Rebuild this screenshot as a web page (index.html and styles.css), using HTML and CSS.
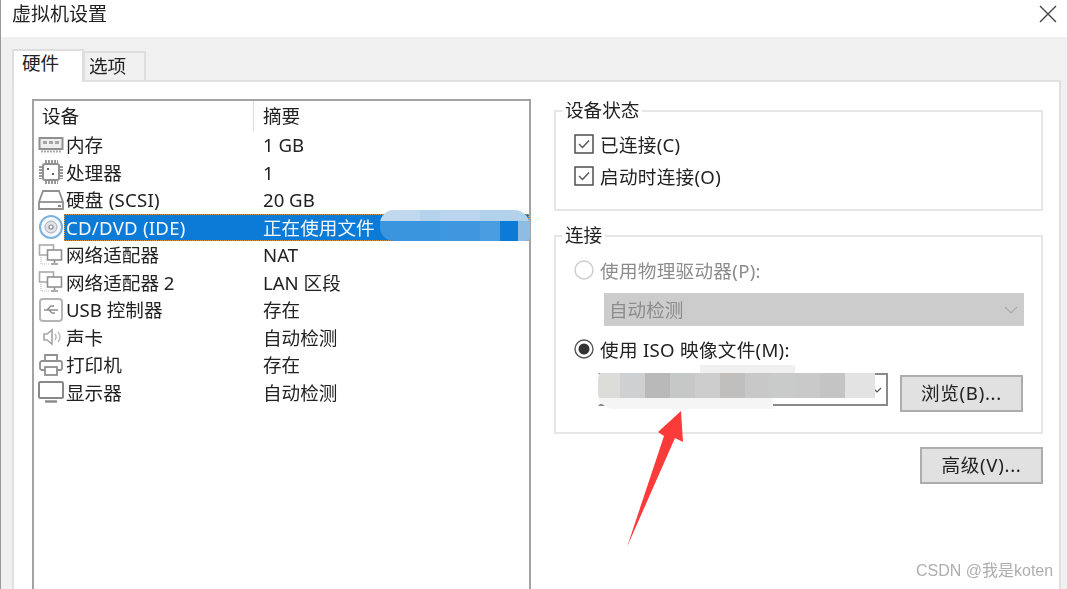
FILE: index.html
```html
<!DOCTYPE html>
<html lang="zh-CN">
<head>
  <meta charset="UTF-8">
  <meta name="viewport" content="width=device-width, initial-scale=1.0">
  <title>虚拟机设置</title>
  <link rel="stylesheet" href="styles.css">
</head>
<body>
  <div class="window">
    <div class="titlebar">
      <span class="title">虚拟机设置</span>
      <svg class="close" width="18" height="18" viewBox="0 0 18 18"><path d="M1 1L17 17M17 1L1 17" stroke="#444" stroke-width="1.4" fill="none"/></svg>
    </div>

    <div class="tabs">
      <div class="tab active">硬件</div>
      <div class="tab">选项</div>
    </div>

    <div class="panel">
      <div class="device-list">
        <div class="list-head">
          <div class="head-name">设备</div>
          <div class="head-summary">摘要</div>
        </div>

        <div class="row">
          <svg class="icon" viewBox="0 0 26 22"><rect x="1.5" y="4" width="23" height="11" fill="#eee" stroke="#909090" stroke-width="2"/><path d="M5 7h4v3H5zM11 7h4v3h-4zM17 7h4v3h-4z" fill="#a5a5a5"/><path d="M3 17.5h20" stroke="#aaa" stroke-width="2" stroke-dasharray="2 1"/></svg>
          <div class="cells"><span class="name">内存</span><span class="summary">1 GB</span></div>
        </div>
        <div class="row">
          <svg class="icon" viewBox="0 0 26 26"><rect x="5" y="5" width="16" height="16" rx="2" fill="#fff" stroke="#909090" stroke-width="2"/><path d="M7 2.500h13M7 23.500h13M2.500 7v13M23.500 7v13" stroke="#999" stroke-width="3" stroke-dasharray="2 1"/><path d="M9 9h2v2H9zM14 14h2v2h-2z" fill="#666"/></svg>
          <div class="cells"><span class="name">处理器</span><span class="summary">1</span></div>
        </div>
        <div class="row">
          <svg class="icon" viewBox="0 0 26 22"><path d="M5 2h16l4 11v7H1v-7z" fill="#fff" stroke="#909090" stroke-width="1.800"/><path d="M1 13h24" stroke="#909090" stroke-width="1.800"/><path d="M20 16h3v2h-3z" fill="#888"/></svg>
          <div class="cells"><span class="name name-latin">硬盘 (SCSI)</span><span class="summary">20 GB</span></div>
        </div>
        <div class="row">
          <svg class="icon" viewBox="0 0 26 26"><circle cx="13" cy="13" r="11" fill="#f4f8fc" stroke="#7fb2de" stroke-width="2"/><circle cx="13" cy="13" r="6" fill="#dfe3e6" stroke="#aab" stroke-width="1"/><circle cx="13" cy="13" r="2" fill="#fff" stroke="#888" stroke-width="1.200"/></svg>
          <div class="cells selected"><span class="name name-latin">CD/DVD (IDE)</span><span class="summary">正在使用文件</span><div class="smudge-list"></div></div>
        </div>
        <div class="row">
          <svg class="icon" viewBox="0 0 26 22"><rect x="1.500" y="1" width="14" height="10" fill="#fff" stroke="#aaa" stroke-width="1.600"/><rect x="9.500" y="6" width="14" height="10" fill="#fff" stroke="#909090" stroke-width="1.600"/><path d="M16.500 16v3M13 20h7" stroke="#909090" stroke-width="1.600"/><path d="M3 13v7h8" stroke="#bbb" stroke-width="1.200" stroke-dasharray="1 1" fill="none"/></svg>
          <div class="cells"><span class="name">网络适配器</span><span class="summary">NAT</span></div>
        </div>
        <div class="row">
          <svg class="icon" viewBox="0 0 26 22"><rect x="1.500" y="1" width="14" height="10" fill="#fff" stroke="#aaa" stroke-width="1.600"/><rect x="9.500" y="6" width="14" height="10" fill="#fff" stroke="#909090" stroke-width="1.600"/><path d="M16.500 16v3M13 20h7" stroke="#909090" stroke-width="1.600"/><path d="M3 13v7h8" stroke="#bbb" stroke-width="1.200" stroke-dasharray="1 1" fill="none"/></svg>
          <div class="cells"><span class="name">网络适配器 2</span><span class="summary">LAN 区段</span></div>
        </div>
        <div class="row">
          <svg class="icon" viewBox="0 0 26 26"><rect x="2" y="2" width="22" height="22" rx="3" fill="#fff" stroke="#b5b5b5" stroke-width="2"/><path d="M6 13h14M9 13l4-4h3M11 13l3 3h3" stroke="#909090" stroke-width="1.400" fill="none"/></svg>
          <div class="cells"><span class="name">USB 控制器</span><span class="summary">存在</span></div>
        </div>
        <div class="row">
          <svg class="icon" viewBox="0 0 26 22"><path d="M6 8h3l5-4v14l-5-4H6z" fill="#fff" stroke="#a5a5a5" stroke-width="1.600"/><path d="M17 8c1.500 2 1.500 4 0 6M20 6c2.500 3 2.500 7 0 10" stroke="#bbb" stroke-width="1.400" fill="none"/></svg>
          <div class="cells"><span class="name">声卡</span><span class="summary">自动检测</span></div>
        </div>
        <div class="row">
          <svg class="icon" viewBox="0 0 26 22"><path d="M7 7V1h12v6" fill="#fff" stroke="#909090" stroke-width="1.800"/><rect x="2" y="7" width="22" height="9" rx="2" fill="#fff" stroke="#909090" stroke-width="1.800"/><rect x="7" y="13" width="12" height="8" fill="#fff" stroke="#909090" stroke-width="1.800"/></svg>
          <div class="cells"><span class="name">打印机</span><span class="summary">存在</span></div>
        </div>
        <div class="row">
          <svg class="icon" viewBox="0 0 26 22"><rect x="1" y="1" width="24" height="16" rx="1.500" fill="#fff" stroke="#888" stroke-width="2"/><path d="M7 20.500h12" stroke="#888" stroke-width="2.400"/></svg>
          <div class="cells"><span class="name">显示器</span><span class="summary">自动检测</span></div>
        </div>
      </div>

      <div class="side">
        <div class="group group-status">
          <div class="group-title">设备状态</div>
          <div class="option">
            <svg class="check" width="20" height="20" viewBox="0 0 20 20"><rect x="1" y="1" width="18" height="18" fill="#fff" stroke="#444" stroke-width="1.400"/><path d="M5 10l3.500 3.500L15 6.500" stroke="#555" stroke-width="1.400" fill="none"/></svg>
            <span>已连接(C)</span>
          </div>
          <div class="option">
            <svg class="check" width="20" height="20" viewBox="0 0 20 20"><rect x="1" y="1" width="18" height="18" fill="#fff" stroke="#444" stroke-width="1.400"/><path d="M5 10l3.500 3.500L15 6.500" stroke="#555" stroke-width="1.400" fill="none"/></svg>
            <span>启动时连接(O)</span>
          </div>
        </div>

        <div class="group group-connect">
          <div class="group-title">连接</div>
          <div class="option disabled">
            <svg class="check" width="20" height="20" viewBox="0 0 20 20"><circle cx="10" cy="10" r="9" fill="#fff" stroke="#ccc" stroke-width="1.400"/></svg>
            <span>使用物理驱动器(P):</span>
          </div>
          <div class="select">
            <span>自动检测</span>
            <svg width="14" height="8" viewBox="0 0 14 8"><path d="M1 1l6 6 6-6" stroke="#aaa" stroke-width="1.200" fill="none"/></svg>
          </div>
          <div class="option option-iso">
            <svg class="check" width="20" height="20" viewBox="0 0 20 20"><circle cx="10" cy="10" r="9" fill="#fff" stroke="#555" stroke-width="1.400"/><circle cx="10" cy="10" r="5.500" fill="#333"/></svg>
            <span>使用 ISO 映像文件(M):</span>
          </div>
          <div class="file-row">
            <div class="combo">
              <svg width="10" height="6" viewBox="0 0 10 6"><path d="M1 1l4 4 4-4" stroke="#555" stroke-width="1.200" fill="none"/></svg>
              <div class="smudge-combo"></div>
            </div>
            <div class="button browse">浏览(B)...</div>
          </div>
        </div>

        <div class="button advanced">高级(V)...</div>
      </div>
    </div>

    <svg class="arrow" width="70" height="145" viewBox="0 0 70 145"><path d="M55 2L57 33L49 29L1 138L38 27L32 23z" fill="#fb3a3a"/></svg>
    <div class="watermark">CSDN @我是koten</div>
  </div>
</body>
</html>
```

FILE: styles.css
```css
html, body {
  margin: 0;
  height: 589px;
  overflow: hidden;
}

body {
  font-family: "Noto Sans", "Noto Sans CJK SC", sans-serif;
  font-size: 18.6px;
  color: #222;
  background-color: #f0f0f0;
}

.window {
  position: relative;
  height: 589px;
  box-sizing: border-box;
  border-left: 1px solid #999;
  filter: blur(0.35px);
}

.titlebar {
  height: 37px;
  padding: 0 10px 0 11px;
  background-color: #fff;
  display: flex;
  align-items: flex-start;
  justify-content: space-between;
}

.title {
  font-size: 19px;
  line-height: 28px;
}

.close {
  margin-top: 5px;
}

.tabs {
  height: 43px;
  padding-left: 11px;
  display: flex;
  align-items: flex-end;
}

.tab {
  box-sizing: border-box;
  width: 63px;
  height: 29px;
  padding-left: 4px;
  line-height: 26px;
  border: 2px solid #dedede;
  border-bottom: none;
  margin-left: -1px;
}

.tab.active {
  position: relative;
  z-index: 1;
  width: 72px;
  height: 33px;
  margin: 0 0 -2px;
  padding-left: 8px;
  line-height: 23px;
  background-color: #fff;
}

.panel {
  box-sizing: border-box;
  width: 1049px;
  height: 509px;
  margin-left: 11px;
  padding: 17px 18px 0;
  background-color: #fff;
  border: 2px solid #e0e0e0;
  border-bottom: none;
  display: flex;
  gap: 23px;
}

.device-list {
  box-sizing: border-box;
  flex: none;
  width: 499px;
  height: 500px;
  border: 2px solid #a3a3a3;
}

.list-head {
  display: flex;
  height: 30px;
  line-height: 30px;
}

.head-name {
  box-sizing: border-box;
  width: 220px;
  padding-left: 8px;
  border-right: 1px solid #ddd;
}

.head-summary {
  padding-left: 9px;
}

.row {
  display: flex;
  height: 27.5px;
  align-items: center;
}

.icon {
  flex: none;
  width: 26px;
  height: 26px;
  margin: 0 0 0 4px;
}

.cells {
  position: relative;
  flex: 1;
  display: flex;
  height: 100%;
  line-height: 27.5px;
}

.name {
  width: 197px;
  padding-left: 2px;
  white-space: nowrap;
}

.name-latin {
  letter-spacing: 0.25px;
}

.summary {
  white-space: nowrap;
}

.selected {
  box-sizing: border-box;
  background-color: #0c7bd8;
  color: #f2f8fd;
  outline: 1px dotted #d99a4a;
  outline-offset: -1px;
}

.smudge-list {
  position: absolute;
  left: 316px;
  right: -1px;
  top: -4px;
  bottom: 0;
  border-radius: 14px 16px 4px 14px;
  background:
    linear-gradient(to right, #c0d9ef 0 40px, #b4d2ec 40px 60px, #bad5ed 60px 100px, #b2d1eb 100px) 0 0 / 100% 11px no-repeat,
    linear-gradient(to right, #3a94de 0 60px, #3f97df 60px 100px, #4a9de1 100px 120px, #0c7bd8 120px 138px, #8fbce3 138px);
}

.side {
  flex: none;
  width: 489px;
  padding-top: 11px;
}

.group {
  box-sizing: border-box;
  border: 2px solid #e6e6e6;
  padding-left: 18px;
}

.group-title {
  width: fit-content;
  margin: -13px 0 0 -12px;
  padding: 0 3px;
  line-height: 24px;
  background-color: #fff;
}

.group-status {
  height: 101px;
  padding-top: 8px;
}

.group-status .group-title {
  margin-top: -22px;
  margin-bottom: 6px;
}

.group-connect {
  height: 199px;
  margin-top: 24px;
  padding-top: 6px;
}

.group-connect .group-title {
  margin-top: -20px;
  margin-bottom: 7px;
}

.option {
  display: flex;
  align-items: center;
  gap: 6px;
  height: 32px;
  letter-spacing: 0.3px;
}

.option span {
  margin-bottom: 2px;
}

.disabled {
  color: #8c8c8c;
}

.select {
  box-sizing: border-box;
  display: flex;
  align-items: center;
  justify-content: space-between;
  width: 420px;
  height: 33px;
  margin: 7px 0 0 30px;
  padding: 0 6px 0 5px;
  background-color: #ccc;
  color: #8c8c8c;
}

.select span {
  margin-bottom: 2px;
}

.option-iso {
  margin-top: 7px;
}

.file-row {
  display: flex;
  margin-top: 8px;
}

.combo {
  position: relative;
  box-sizing: border-box;
  width: 290px;
  height: 33px;
  margin-left: 24px;
  padding-right: 4px;
  border: 2px solid #8a8a8a;
  border-left-color: transparent;
  display: flex;
  align-items: center;
  justify-content: flex-end;
}

/* blurred-out file path: pixel blocks, a pale band under them, a few blocks on top */
.smudge-combo {
  position: absolute;
  left: -2px;
  top: -10px;
  width: 277px;
  height: 44px;
  border-radius: 16px 4px 10px 16px;
  background:
    linear-gradient(#f0f0f0, #f0f0f0) 102px 0 / 95px 8px no-repeat,
    linear-gradient(to right, #dcdcd8 0 22px, #cfd0d2 22px 47px, #b9b9b9 47px 72px, #c6c8c8 72px 97px, #cdcdcd 97px 122px, #c0bfbd 122px 147px, #c8c8c8 147px 172px, #c9cbca 172px 197px, #c9c9c9 197px 222px, #c4c4c4 222px 247px, #e3e3e3 247px) 0 8px / 100% 25px no-repeat,
    linear-gradient(#f5f5f5, #f5f5f5) 0 33px / 175px 11px no-repeat;
}

.button {
  box-sizing: border-box;
  width: 123px;
  height: 37px;
  line-height: 32px;
  letter-spacing: 0.7px;
  text-align: center;
  background-color: #e1e1e1;
  border: 2px solid #adadad;
}

.browse {
  margin: 2px 0 0 12px;
}

.advanced {
  margin: 13px 0 0 auto;
}

.arrow {
  position: absolute;
  left: 625px;
  top: 409px;
}

.watermark {
  position: absolute;
  left: 915px;
  top: 561px;
  font-family: "Liberation Sans", "Noto Sans CJK SC", sans-serif;
  font-size: 16px;
  line-height: 20px;
  color: #aeaeae;
}
```
